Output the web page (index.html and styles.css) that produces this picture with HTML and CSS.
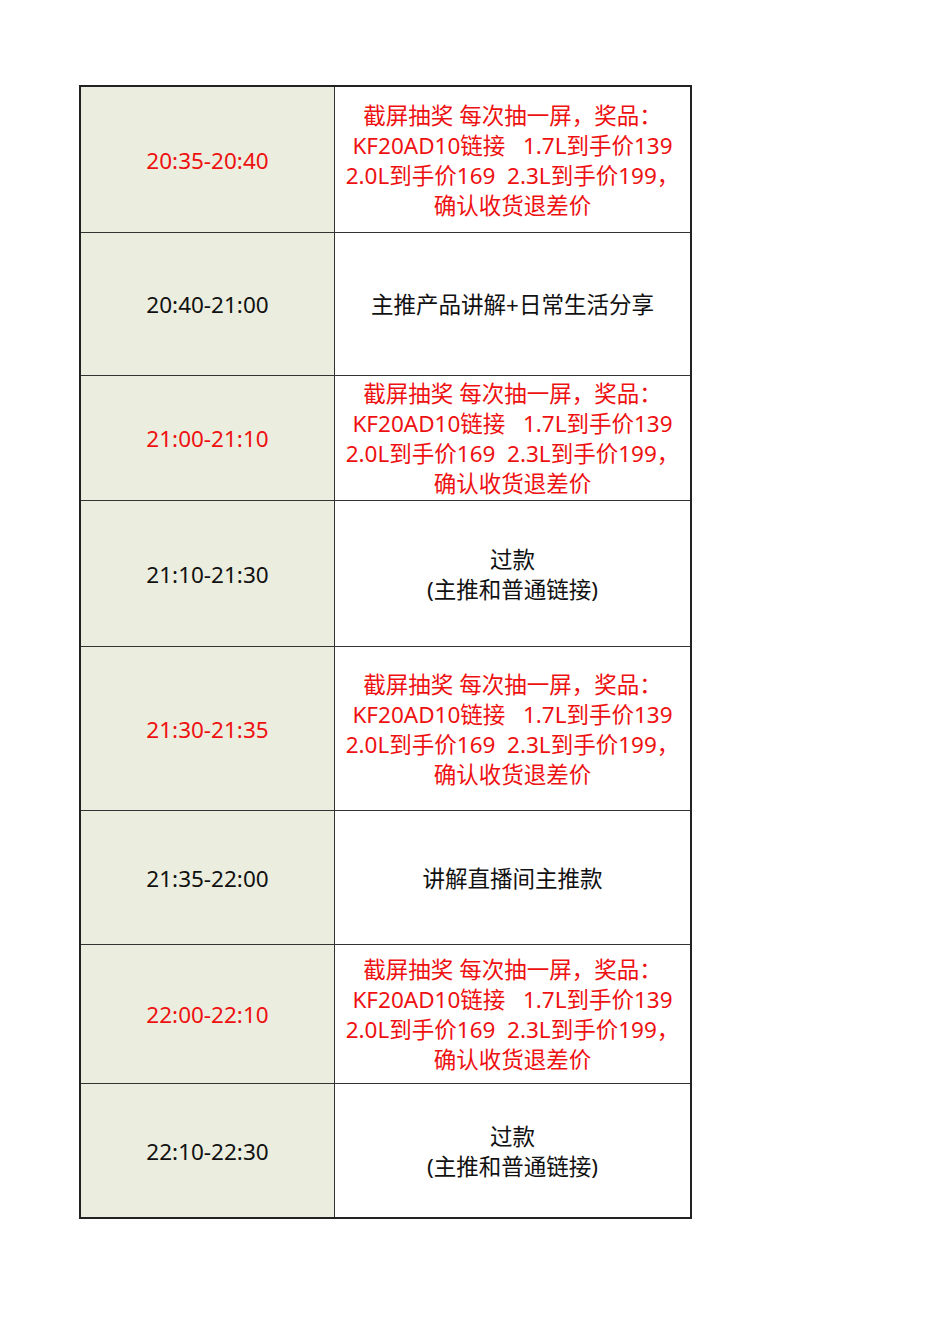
FILE: index.html
```html
<!DOCTYPE html>
<html lang="zh-CN">
<head>
<meta charset="utf-8">
<link rel="stylesheet" href="styles.css">
</head>
<body>
<table class="sched">
  <tr class="r1"><td class="time red">20:35-20:40</td><td class="desc red">截屏抽奖 每次抽一屏，奖品：<br>KF20AD10链接&nbsp;&nbsp;&nbsp;1.7L到手价139<br>2.0L到手价169&nbsp;&nbsp;2.3L到手价199，<br>确认收货退差价</td></tr>
  <tr class="r2"><td class="time">20:40-21:00</td><td class="desc">主推产品讲解+日常生活分享</td></tr>
  <tr class="r3"><td class="time red">21:00-21:10</td><td class="desc red">截屏抽奖 每次抽一屏，奖品：<br>KF20AD10链接&nbsp;&nbsp;&nbsp;1.7L到手价139<br>2.0L到手价169&nbsp;&nbsp;2.3L到手价199，<br>确认收货退差价</td></tr>
  <tr class="r4"><td class="time">21:10-21:30</td><td class="desc">过款<br>(主推和普通链接)</td></tr>
  <tr class="r5"><td class="time red">21:30-21:35</td><td class="desc red">截屏抽奖 每次抽一屏，奖品：<br>KF20AD10链接&nbsp;&nbsp;&nbsp;1.7L到手价139<br>2.0L到手价169&nbsp;&nbsp;2.3L到手价199，<br>确认收货退差价</td></tr>
  <tr class="r6"><td class="time">21:35-22:00</td><td class="desc">讲解直播间主推款</td></tr>
  <tr class="r7"><td class="time red">22:00-22:10</td><td class="desc red">截屏抽奖 每次抽一屏，奖品：<br>KF20AD10链接&nbsp;&nbsp;&nbsp;1.7L到手价139<br>2.0L到手价169&nbsp;&nbsp;2.3L到手价199，<br>确认收货退差价</td></tr>
  <tr class="r8"><td class="time">22:10-22:30</td><td class="desc">过款<br>(主推和普通链接)</td></tr>
</table>
</body>
</html>
```
FILE: styles.css
```css
html, body {
  margin: 0;
  padding: 0;
  background: #ffffff;
}
body {
  font-family: "Noto Sans", "Noto Sans CJK SC", sans-serif;
  font-size: 22.5px;
  line-height: 30px;
  color: #111111;
}
.sched {
  margin: 85px 0 0 79px;
  border-collapse: collapse;
  border: 2px solid #222;
  table-layout: fixed;
  width: 613px;
}
.sched td {
  border: 1px solid #333;
  text-align: center;
  vertical-align: middle;
  padding: 2px 0 0 0;
}
.sched td.time {
  width: 253px;
  background: #ebeedf;
}
.red {
  color: #ee1111;
}
.r1 td { height: 143px; }
.r2 td { height: 140px; }
.r3 td { height: 122px; }
.r4 td { height: 143px; }
.r5 td { height: 161px; }
.r6 td { height: 131px; }
.r7 td { height: 136px; }
.r8 td { height: 131px; }
```
